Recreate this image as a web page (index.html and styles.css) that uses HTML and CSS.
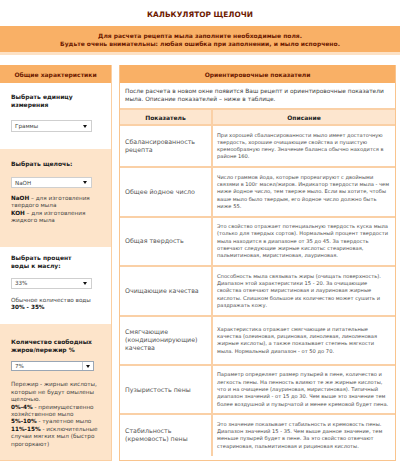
FILE: index.html
```html
<!DOCTYPE html>
<html lang="ru">
<head>
    <meta charset="UTF-8">
    <meta name="viewport" content="width=device-width, initial-scale=1.0">
    <title>Калькулятор щелочи</title>
    <link rel="stylesheet" href="styles.css">
</head>
<body>
    <h1 class="title">КАЛЬКУЛЯТОР ЩЕЛОЧИ</h1>
    <div class="notice">
        Для расчета рецепта мыла заполните необходимые поля.<br>
        Будьте очень внимательны: любая ошибка при заполнении, и мыло испорчено.
    </div>

    <div class="layout">
        <div class="side">
            <div class="box-head">Общие характеристики</div>

            <div class="field unit">
                <div class="field-label">Выбрать единицу<br>измерения</div>
                <div class="select"><span>Граммы</span><i class="arrow"></i></div>
            </div>

            <div class="field alt alkali">
                <div class="field-label">Выбрать щелочь:</div>
                <div class="select"><span>NaOH</span><i class="arrow"></i></div>
                <p class="hint"><b>NaOH</b> – для изготовления твердого мыла<br><b>KOH</b> – для изготовления жидкого мыла</p>
            </div>

            <div class="field water">
                <div class="field-label">Выбрать процент<br>воды к маслу:</div>
                <div class="select"><span>33%</span><i class="arrow"></i></div>
                <p class="hint">Обычное количество воды<br><b>30% - 35%</b></p>
            </div>

            <div class="field alt superfat">
                <div class="field-label">Количество свободных<br>жиров/пережир %</div>
                <div class="select focused"><span>7%</span><i class="arrow"></i></div>
                <p class="hint">Пережир - жирные кислоты, которые не будут омылены щелочью.<br>
                    <b>0%-4%</b> - преимущественно хозяйственное мыло<br>
                    <b>5%-10%</b> - туалетное мыло<br>
                    <b>11%-15%</b> - исключительные случаи мягких мыл (быстро прогоркают)</p>
            </div>
        </div>

        <div class="main">
            <div class="box-head">Ориентировочные показатели</div>
            <p class="intro">После расчета в новом окне появится Ваш рецепт и ориентировочные показатели мыла. Описание показателей – ниже в таблице.</p>
            <table class="indicators">
                <tr>
                    <th class="name-col">Показатель</th>
                    <th>Описание</th>
                </tr>
                <tr>
                    <td class="name">Сбалансированность<br>рецепта</td>
                    <td class="desc">При хорошей сбалансированности мыло имеет достаточную<br>твердость, хорошие очищающие свойства и пушистую<br>кремообразную пену. Значение баланса обычно находится в<br>районе 160.</td>
                </tr>
                <tr>
                    <td class="name">Общее йодное число</td>
                    <td class="desc">Число граммов йода, которые прореагируют с двойными<br>связями в 100г масел/жиров. Индикатор твердости мыла - чем<br>ниже йодное число, тем тверже мыло. Если вы хотите, чтобы<br>ваше мыло было твердым, его йодное число должно быть<br>ниже 55.</td>
                </tr>
                <tr>
                    <td class="name">Общая твердость</td>
                    <td class="desc">Это свойство отражает потенциальную твердость куска мыла<br>(только для твердых сортов). Нормальный процент твердости<br>мыла находится в диапазоне от 35 до 45. За твердость<br>отвечают следующие жирные кислоты: стеариновая,<br>пальмитиновая, миристиновая, лауриновая.</td>
                </tr>
                <tr>
                    <td class="name">Очищающие качества</td>
                    <td class="desc">Способность мыла связывать жиры (очищать поверхность).<br>Диапазон этой характеристики 15 - 20. За очищающие<br>свойства отвечают миристиновая и лауриновая жирные<br>кислоты. Слишком большое их количество может сушить и<br>раздражать кожу.</td>
                </tr>
                <tr class="tall">
                    <td class="name">Смягчающие<br>(кондиционирующие)<br>качества</td>
                    <td class="desc">Характеристика отражает смягчающие и питательные<br>качества (олеиновая, рициновая, линолевая, линоленовая<br>жирные кислоты), а также показывает степень мягкости<br>мыла. Нормальный диапазон - от 50 до 70.</td>
                </tr>
                <tr>
                    <td class="name">Пузыристость пены</td>
                    <td class="desc">Параметр определяет размер пузырей в пене, количество и<br>легкость пены. На пенность влияют те же жирные кислоты,<br>что и на очищение (лауриновая, миристиновая). Типичный<br>диапазон значений - от 15 до 30. Чем выше это значение тем<br>более воздушной и пузырчатой и менее кремовой будет пена.</td>
                </tr>
                <tr>
                    <td class="name">Стабильность<br>(кремовость) пены</td>
                    <td class="desc">Это значение показывает стабильность и кремовость пены.<br>Диапазон значений 15 - 35. Чем выше данное значение, тем<br>меньше пузырей будет в пене. За это свойство отвечают<br>стеариновая, пальмитиновая и рициновая кислоты.</td>
                </tr>
            </table>
        </div>
    </div>
</body>
</html>
```

FILE: styles.css
```css
body {
    margin: 0;
    font-family: "DejaVu Sans", Verdana, sans-serif;
    color: #333;
    background: #fff;
}
.title {
    margin: 0;
    height: 26px;
    line-height: 30px;
    text-align: center;
    font-size: 7.4px;
    font-weight: bold;
    color: #6d1a00;
}
.notice {
    height: 29px;
    padding-top: 1px;
    box-sizing: border-box;
    display: flex;
    flex-direction: column;
    justify-content: center;
    background-color: #f9b066;
    border-bottom: 3px solid #fde1c4;
    text-align: center;
    font-size: 6px;
    line-height: 8px;
    font-weight: bold;
    color: #6d1a00;
}
.layout {
    display: flex;
    gap: 7px;
    margin-top: 10px;
}
.box-head {
    height: 18px;
    line-height: 19px;
    background-color: #f9b066;
    text-align: center;
    font-size: 6px;
    font-weight: bold;
    color: #6d1a00;
}

/* left column */
.side {
    width: 112px;
    box-sizing: border-box;
    border: 1px solid #fbcfa2;
    border-top: none;
    border-left: none;
}
.field {
    padding-left: 11px;
    padding-right: 8px;
    background: #fff;
}
.field.alt {
    background-color: #fde4ca;
}
.field-label {
    font-size: 6px;
    line-height: 8px;
    font-weight: bold;
    color: #222;
}
.unit {
    padding-top: 10px;
    padding-bottom: 17px;
}
.unit .select {
    margin-top: 11px;
    height: 12px;
}
.alkali {
    padding-top: 11px;
    padding-bottom: 22px;
}
.alkali .select {
    margin-top: 9px;
}
.alkali .hint {
    margin-top: 7px;
}
.water {
    padding-top: 7px;
    padding-bottom: 13px;
}
.water .select,
.water .hint {
    margin-top: 8px;
}
.superfat {
    padding-top: 14px;
    padding-bottom: 12px;
}
.superfat .select {
    margin-top: 7px;
}
.superfat .hint {
    margin-top: 10px;
}
.select {
    display: flex;
    align-items: center;
    justify-content: space-between;
    height: 11px;
    width: 81px;
    box-sizing: border-box;
    padding: 0 4px 0 3px;
    background: #fff;
    border: 1px solid #cfcfcf;
    font-size: 5.6px;
    color: #444;
}
.arrow {
    width: 0;
    height: 0;
    border-left: 2.5px solid transparent;
    border-right: 2.5px solid transparent;
    border-top: 3px solid #111;
}
.select.focused {
    width: 83px;
    height: 10px;
    padding-right: 0;
    border-color: #9aa6b4;
}
.select.focused .arrow {
    width: 10px;
    height: 100%;
    border: none;
    border-left: 1px solid #c4cad2;
    position: relative;
}
.select.focused .arrow::after {
    content: "";
    position: absolute;
    left: 3px;
    top: 3px;
    border-left: 2.5px solid transparent;
    border-right: 2.5px solid transparent;
    border-top: 3px solid #111;
}
.hint {
    margin: 0;
    font-size: 5.7px;
    line-height: 7.4px;
    color: #444;
}
.hint b {
    color: #111;
}

/* right column */
.main {
    width: 277px;
    box-sizing: border-box;
    border: 1px solid #f9c48e;
    border-top: none;
}
.intro {
    margin: 0;
    padding: 5px 4px 5px 5px;
    font-size: 5.9px;
    line-height: 7.5px;
    color: #444;
}
.indicators {
    width: 100%;
    border-collapse: collapse;
    border-top: 2px solid #fad0a6;
}
.indicators th {
    height: 14px;
    padding: 0;
    background-color: #fde6cf;
    border: 2px solid #fad0a6;
    border-top: none;
    font-size: 6px;
    color: #222;
}
.indicators th.name-col {
    width: 91px;
}
.indicators td {
    border: 2px solid #fad0a6;
    border-left-width: 1px;
    vertical-align: middle;
}
.indicators tr > :first-child {
    border-left: none;
}
.indicators tr > :last-child {
    border-right: none;
}
.indicators tr:last-child td {
    border-bottom: none;
}
.indicators td.name {
    padding: 5.5px 4px 5.5px 5px;
    font-size: 6.3px;
    line-height: 8px;
    color: #555;
}
.indicators td.desc {
    padding: 5.5px 0 5.5px 4px;
    font-size: 5.15px;
    line-height: 7.3px;
    white-space: nowrap;
    color: #4d4d4d;
}
.indicators tr.tall td {
    padding-top: 9px;
    padding-bottom: 9px;
}
```
